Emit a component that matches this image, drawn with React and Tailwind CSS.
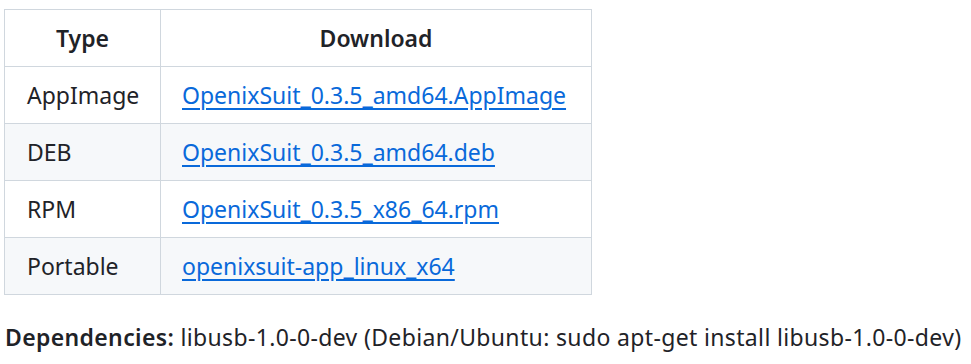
import React from 'react';

export default function App() {
  const rows = [
    { type: 'AppImage', file: 'OpenixSuit_0.3.5_amd64.AppImage' },
    { type: 'DEB', file: 'OpenixSuit_0.3.5_amd64.deb' },
    { type: 'RPM', file: 'OpenixSuit_0.3.5_x86_64.rpm' },
    { type: 'Portable', file: 'openixsuit-app_linux_x64' },
  ];

  return (
    <div
      className="bg-white w-[971px] h-[364px] pl-[4px] pt-[9px] text-[23px] leading-[1.4] text-[#1f2328]"
      style={{ fontFamily: '"Noto Sans", "Open Sans", sans-serif' }}
    >
      <table className="border-collapse">
        <thead>
          <tr className="h-[57px]">
            <th className="w-[156px] border border-[#d0d7de] px-[21px] font-semibold text-center">Type</th>
            <th className="w-[431px] border border-[#d0d7de] px-[21px] font-semibold text-center">Download</th>
          </tr>
        </thead>
        <tbody>
          {rows.map((r, i) => (
            <tr key={r.type} className={`h-[57px] ${i % 2 === 1 ? 'bg-[#f6f8fa]' : 'bg-white'}`}>
              <td className="border border-[#d0d7de] pl-[22px] pr-[10px] whitespace-nowrap">{r.type}</td>
              <td className="border border-[#d0d7de] pl-[21px] pr-[10px] whitespace-nowrap">
                <a href="#" className="text-[#0969da] underline underline-offset-[4px]">{r.file}</a>
              </td>
            </tr>
          ))}
        </tbody>
      </table>
      <p className="mt-[26px] pl-[1px] whitespace-nowrap tracking-[0.35px]">
        <span className="font-semibold">Dependencies:</span> libusb-1.0-0-dev (Debian/Ubuntu: sudo apt-get install libusb-1.0-0-dev)
      </p>
    </div>
  );
}
